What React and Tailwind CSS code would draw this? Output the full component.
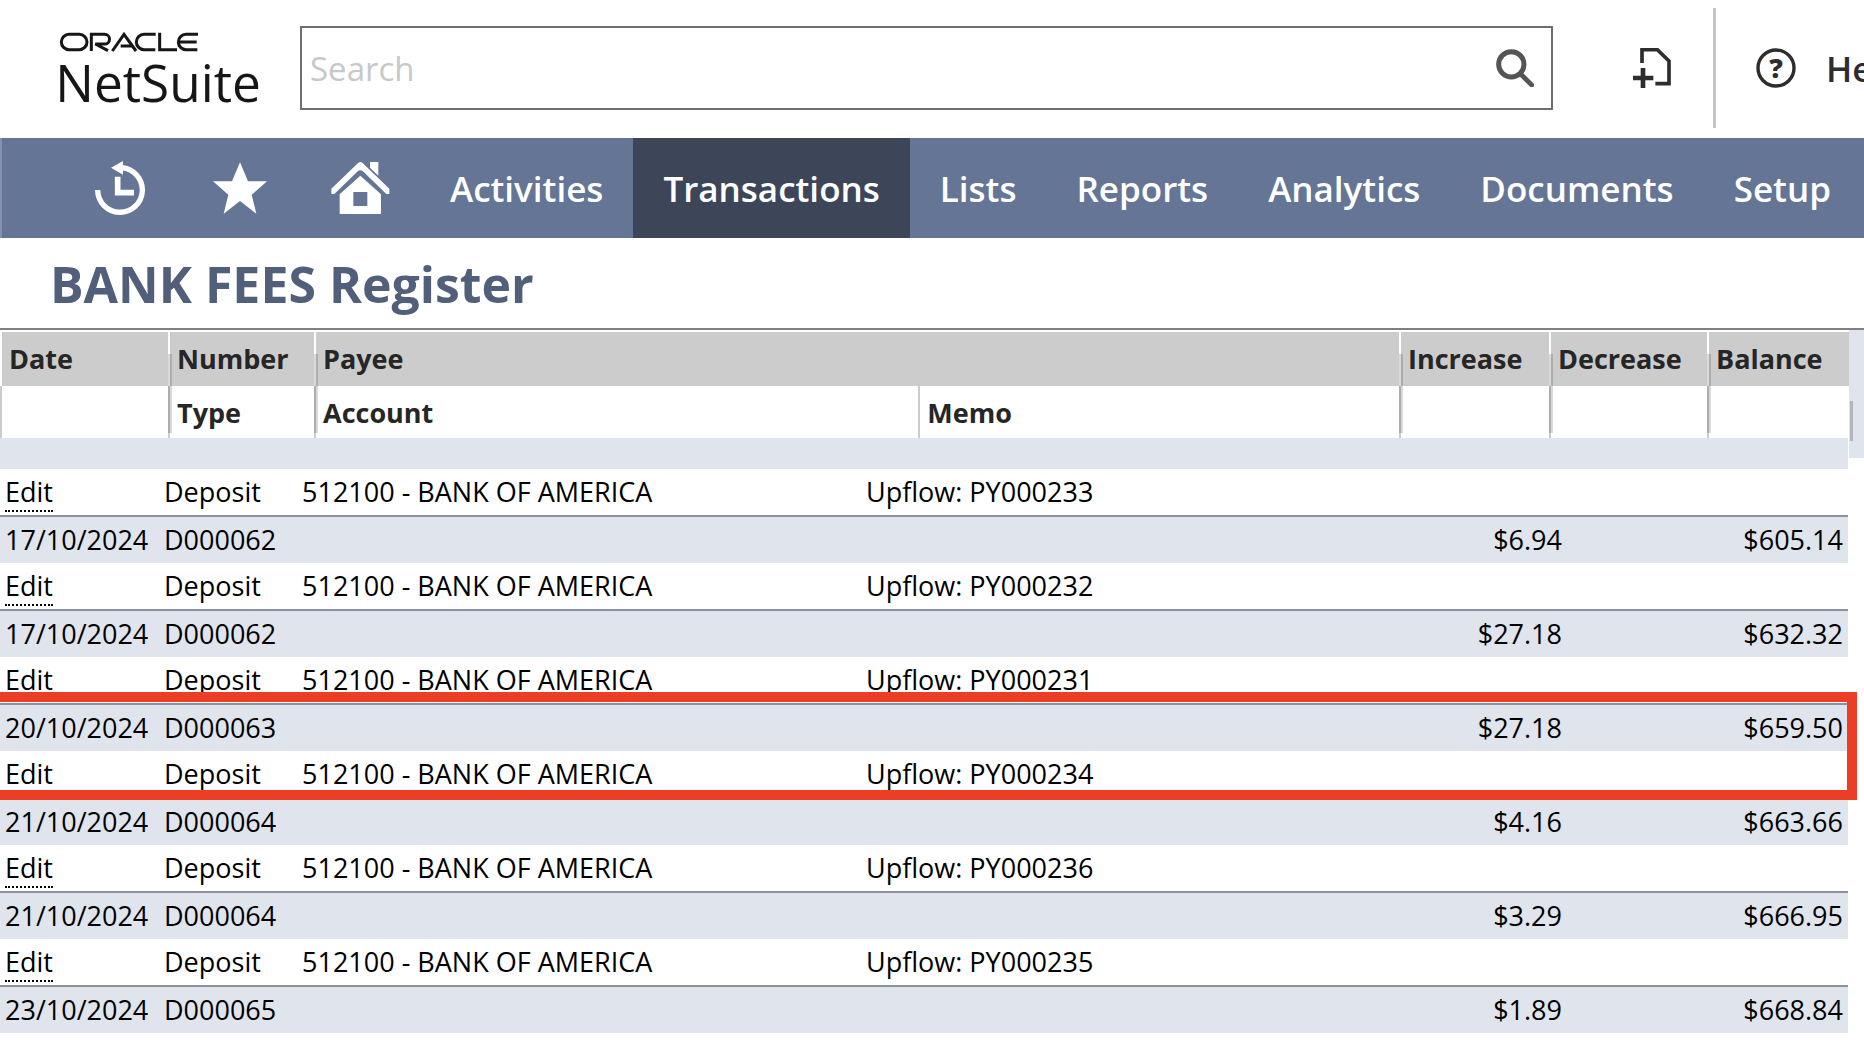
import { useState } from 'react';

const navItems = [
  { label: 'Activities' },
  { label: 'Transactions', active: true },
  { label: 'Lists' },
  { label: 'Reports' },
  { label: 'Analytics' },
  { label: 'Documents' },
  { label: 'Setup' },
];

const account = '512100 - BANK OF AMERICA';

const entries = [
  { id: 1, continued: true, account, memo: 'Upflow: PY000233' },
  { id: 2, date: '17/10/2024', number: 'D000062', increase: '$6.94', balance: '$605.14', account, memo: 'Upflow: PY000232' },
  { id: 3, date: '17/10/2024', number: 'D000062', increase: '$27.18', balance: '$632.32', account, memo: 'Upflow: PY000231' },
  { id: 4, date: '20/10/2024', number: 'D000063', increase: '$27.18', balance: '$659.50', account, memo: 'Upflow: PY000234', highlighted: true },
  { id: 5, date: '21/10/2024', number: 'D000064', increase: '$4.16', balance: '$663.66', account, memo: 'Upflow: PY000236' },
  { id: 6, date: '21/10/2024', number: 'D000064', increase: '$3.29', balance: '$666.95', account, memo: 'Upflow: PY000235' },
  { id: 7, date: '23/10/2024', number: 'D000065', increase: '$1.89', balance: '$668.84' },
];

const Logo = () => (
  <a href="#home" aria-label="Oracle NetSuite" className="block w-[200px] shrink-0">
    <svg viewBox="0 0 600 216" className="block w-full overflow-visible" fill="none" stroke="#161616" strokeWidth="9">
      <rect x="4" y="7" width="77" height="46" rx="23" />
      <path d="M94 57V7h40a14.500 14.500 0 0 1 0 29h-28l38 20" />
      <path d="M157 57 192 7l36 50M182 42h34" />
      <path d="M287 7h-35a23 23 0 0 0 0 46h34" />
      <path d="M299 2v51h52" />
      <path d="M414 7h-36a23 23 0 0 0 0 46h34M358 30h52" />
      <text x="-14" y="210" fill="#161616" stroke="none" fontSize="154" fontWeight="500" fontFamily="Open Sans, sans-serif">
        NetSuite
      </text>
    </svg>
  </a>
);

const SearchIcon = () => (
  <svg viewBox="169 150 114 114" className="size-[38px]" fill="none" stroke="#555">
    <circle cx="215" cy="196" r="38" strokeWidth="15" />
    <path d="M243 225l33 33" strokeWidth="14" strokeLinecap="round" />
  </svg>
);

const NewRecordIcon = () => (
  <svg viewBox="579 144 114 120" className="h-10 w-[38px]" fill="none" stroke="#2d2d2d">
    <path d="M606 189v-40h46l35 34v68h-41" strokeWidth="11" />
    <path d="M579 234h61M609 204v60" strokeWidth="14" />
  </svg>
);

const HelpIcon = () => (
  <svg viewBox="0 0 40 40" className="size-10 shrink-0">
    <circle cx="20" cy="20" r="18" fill="none" stroke="#2d2d2d" strokeWidth="3.400" />
    <text x="20" y="30" textAnchor="middle" fill="#2d2d2d" fontSize="27" fontWeight="800" fontFamily="Open Sans, sans-serif">
      ?
    </text>
  </svg>
);

const RecentIcon = () => (
  <svg viewBox="285 483 150 162" className="h-[54px] w-[50px]" fill="none" stroke="white">
    <path d="M293 570a67 67 0 1 0 72-67" strokeWidth="16" />
    <path d="M353 530v48h49" strokeWidth="17" />
    <path d="M333 503l36-20v41z" fill="white" stroke="none" />
  </svg>
);

const StarIcon = () => (
  <svg viewBox="639 483 162 162" className="size-[54px]" fill="white">
    <path d="M720 487l24 57h57l-46 40 14 57-49-38-49 38 14-57-46-40h57z" />
  </svg>
);

const HomeIcon = () => (
  <svg viewBox="992 483 177 162" className="h-[54px] w-[59px]" fill="white">
    <path d="M1074 488q6-4 12 0l81 78v16h-9l-71-69q-7-5-14 0l-71 69h-9v-16z" />
    <path d="M1109 486h25v41l-25-24z" />
    <path fillRule="evenodd" d="M1080 527l62 56v59h-124v-59zM1059 576v42h42v-42z" />
  </svg>
);

const shortcuts = [
  { label: 'Recent records', icon: <RecentIcon /> },
  { label: 'Shortcuts', icon: <StarIcon /> },
  { label: 'Home', icon: <HomeIcon /> },
];

const ResizeHandle = () => (
  <span className="absolute top-[22px] -left-0.5 z-10 h-[79px] w-1 bg-black/15"></span>
);

const headCell = 'relative h-[54px] border-l-2 border-white bg-[#ccc] px-[7px]';
const subCell = 'h-[52px] border-l-2 border-[#ccc] bg-white px-[7px] pt-0.5';

const EntryRows = ({ entry }) => {
  const band = 'h-12 border-t-2 border-[#8a90a1] bg-[#e0e4ed]';

  return (
    <tbody className="relative">
      {entry.continued ? (
        <tr>
          <td colSpan={7} className="h-[31px] bg-[#e0e4ed] p-0"></td>
        </tr>
      ) : (
        <tr>
          <td className={`${band} pl-[5px]`}>{entry.date}</td>
          <td className={`${band} pl-[5px]`}>{entry.number}</td>
          <td className={band}></td>
          <td className={band}></td>
          <td className={`${band} pr-[5px] text-right`}>{entry.increase}</td>
          <td className={band}></td>
          <td className={`${band} pr-[5px] text-right`}>
            {entry.balance}
            {entry.highlighted && (
              <span className="pointer-events-none absolute -top-[11px] -right-[9px] -bottom-[3px] left-0 z-10 border-y-10 border-r-10 border-[#ec3e25]"></span>
            )}
          </td>
        </tr>
      )}
      {entry.memo && (
        <tr>
          <td className="h-[46px] pl-[5px]">
            <a href="#edit" className="border-b-2 border-dotted border-black">Edit</a>
          </td>
          <td className="pl-[5px]">Deposit</td>
          <td className="pl-[5px]">{entry.account}</td>
          <td colSpan={4} className="pl-[5px]">{entry.memo}</td>
        </tr>
      )}
    </tbody>
  );
};

const App = () => {
  const [query, setQuery] = useState('');

  return (
    <div className="min-h-screen overflow-hidden bg-white font-['Open_Sans',sans-serif] text-black">
      {/* Top bar */}
      <header className="flex items-center overflow-hidden pt-2 pb-[10px] pl-[60px]">
        <Logo />
        <form className="ml-10 flex h-[84px] flex-1 items-center border-2 border-[#6e6e6e] pr-[17px] pl-2" onSubmit={(e) => e.preventDefault()}>
          <input
            type="text"
            aria-label="Search"
            placeholder="Search"
            value={query}
            onChange={(e) => setQuery(e.target.value)}
            className="min-w-0 flex-1 pt-0.5 text-[33px] outline-none placeholder:text-[#c8c8c8]"
          />
          <button type="submit" aria-label="Submit search">
            <SearchIcon />
          </button>
        </form>
        <button type="button" aria-label="Create new" className="mr-[42px] ml-20">
          <NewRecordIcon />
        </button>
        <div className="h-[120px] w-[3px] bg-[#c4c4c4]"></div>
        <a href="#help" className="ml-10 flex w-[108px] shrink-0 items-center gap-[30px] text-[35px] font-semibold text-[#2d2d2d]">
          <HelpIcon />
          <span className="pt-0.5">Help</span>
        </a>
      </header>

      {/* Navigation */}
      <nav className="flex h-[100px] items-stretch border-l-2 border-[#8392b0] bg-[#647596] pl-[58px] text-[35px] font-semibold text-white">
        {shortcuts.map((item) => (
          <a key={item.label} href="#shortcut" aria-label={item.label} className="flex w-[120px] shrink-0 items-center justify-center">
            {item.icon}
          </a>
        ))}
        {navItems.map((item) => (
          <a
            key={item.label}
            href="#nav"
            className={`flex shrink-0 items-center px-[30px] pt-0.5 ${item.active ? 'bg-[#3d4658]' : ''}`}
          >
            {item.label}
          </a>
        ))}
      </nav>

      <h1 className="h-[92px] border-b-2 border-[#807f82] pl-[50px] text-[50px] leading-[92px] font-bold text-[#525f7b]">
        BANK FEES Register
      </h1>

      {/* Register */}
      <main className="flex text-[27px] leading-9">
        <div className="min-w-0 flex-1 pt-0.5">
          <table className="w-full table-fixed border-separate border-spacing-0 text-left text-[#262626]">
            <colgroup>
              <col className="w-[168px]" />
              <col className="w-[146px]" />
              <col />
              <col className="w-[26%]" />
              <col className="w-[150px]" />
              <col className="w-[158px]" />
              <col className="w-[142px]" />
            </colgroup>
            <thead>
              <tr>
                <th className={headCell}>Date</th>
                <th className={headCell}>Number<ResizeHandle /></th>
                <th className={headCell} colSpan={2}>Payee<ResizeHandle /></th>
                <th className={headCell}>Increase<ResizeHandle /></th>
                <th className={headCell}>Decrease<ResizeHandle /></th>
                <th className={headCell}>Balance<ResizeHandle /></th>
              </tr>
              <tr>
                <th className={subCell}></th>
                <th className={subCell}>Type</th>
                <th className={subCell}>Account</th>
                <th className={subCell}>Memo</th>
                <th className={subCell}></th>
                <th className={subCell}></th>
                <th className={subCell}></th>
              </tr>
            </thead>
          </table>

          <div className="pr-px">
            <table className="w-full table-fixed border-separate border-spacing-0">
              <colgroup>
                <col className="w-[159px]" />
                <col className="w-[138px]" />
                <col />
                <col className="w-[535px]" />
                <col className="w-[171px]" />
                <col className="w-[141px]" />
                <col className="w-[140px]" />
              </colgroup>
              {entries.map((entry) => (
                <EntryRows key={entry.id} entry={entry} />
              ))}
            </table>
          </div>
        </div>

        <div className="h-32 w-[15px] shrink-0 bg-[#e0e4ed] pt-[71px] pl-px">
          <div className="h-10 w-[3px] bg-[#b4b6ba]"></div>
        </div>
      </main>
    </div>
  );
};

export default App;
